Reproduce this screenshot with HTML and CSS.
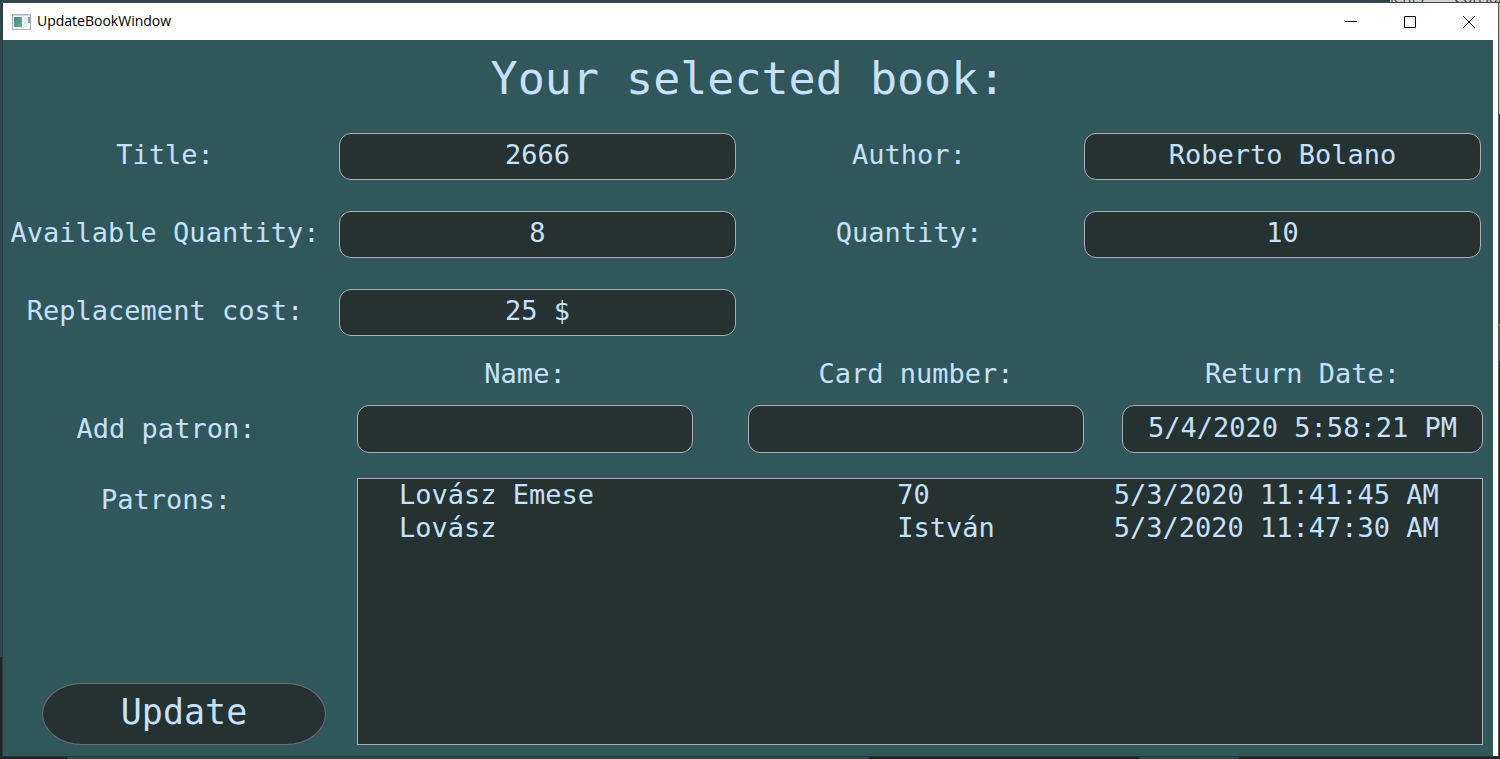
FILE: index.html
```
<!DOCTYPE html>
<html lang="en">
<head>
<meta charset="utf-8">
<title>UpdateBookWindow</title>
<link rel="stylesheet" href="styles.css">
</head>
<body>
<div class="desktop">
  <div class="edge-top" aria-hidden="true"><span class="behind-tabs"><span>ients</span><span>Consol</span></span></div>
  <div class="edge-left"></div>
  <div class="window">
    <header class="titlebar">
      <svg class="app-icon" width="20" height="16" viewBox="0 0 20 16" aria-hidden="true">
        <defs>
          <linearGradient id="pane" x1="0" y1="0" x2="1" y2="1">
            <stop offset="0" stop-color="#4a7fa5"/>
            <stop offset="1" stop-color="#5fb878"/>
          </linearGradient>
        </defs>
        <rect x="0.5" y="0.5" width="18" height="15" fill="#f4f4f6" stroke="#b4b4b8"/>
        <rect x="1" y="1" width="17" height="1" fill="#d4d4d8"/>
        <rect x="2" y="3" width="8" height="10" fill="url(#pane)"/>
        <rect x="12" y="3" width="3" height="10" fill="#e2e6e9"/>
        <rect x="16" y="3" width="2" height="6" fill="#68a8b8"/>
      </svg>
      <span class="caption">UpdateBookWindow</span>
      <div class="window-buttons">
        <button type="button" aria-label="Minimize"><svg width="12" height="12" viewBox="0 0 12 12"><path d="M0 5.5H12" stroke="#000"/></svg></button>
        <button type="button" aria-label="Maximize"><svg width="12" height="12" viewBox="0 0 12 12"><path d="M.5 .5H11.5V11.5H.5Z" stroke="#000" fill="none"/></svg></button>
        <button type="button" aria-label="Close"><svg width="12" height="12" viewBox="0 0 12 12"><path d="M0 0L12 12M12 0L0 12" stroke="#000"/></svg></button>
      </div>
    </header>
    <main class="client">
      <h1 class="heading">Your selected book:</h1>
      <form class="form">
        <div class="details">
          <label class="label" for="title">Title:</label>
          <input class="field" id="title" value="2666">
          <label class="label label-right" for="author">Author:</label>
          <input class="field" id="author" value="Roberto Bolano">
          <label class="label" for="available">Available Quantity:</label>
          <input class="field" id="available" value="8">
          <label class="label label-right" for="quantity">Quantity:</label>
          <input class="field" id="quantity" value="10">
          <label class="label" for="cost">Replacement cost:</label>
          <input class="field" id="cost" value="25 $">
        </div>
        <div class="patron-area">
          <div class="side">
            <span class="label" id="add-patron">Add patron:</span>
            <span class="label patrons-label" id="patrons">Patrons:</span>
            <button class="update" type="button">Update</button>
          </div>
          <div class="patron-main">
            <div class="patron-fields" role="group" aria-labelledby="add-patron">
              <label class="label" for="name">Name:</label>
              <label class="label" for="card">Card number:</label>
              <label class="label label-date" for="date">Return Date:</label>
              <input class="field" id="name">
              <input class="field" id="card">
              <input class="field field-date" id="date" value="5/4/2020 5:58:21 PM">
            </div>
            <div class="list">
              <table class="patrons" aria-labelledby="patrons">
                <colgroup><col class="col-name"><col class="col-card"><col></colgroup>
                <tbody>
                  <tr><td>Lovász Emese</td><td>70</td><td>5/3/2020 11:41:45 AM</td></tr>
                  <tr><td>Lovász</td><td>István</td><td>5/3/2020 11:47:30 AM</td></tr>
                </tbody>
              </table>
            </div>
          </div>
        </div>
      </form>
    </main>
  </div>
  <div class="edge-right"></div>
  <div class="edge-bottom"><span></span><span></span></div>
</div>
</body>
</html>
```
FILE: styles.css
```
* { box-sizing: border-box; }

body {
  margin: 0;
  background: #1f2726;
  color: #c5e1ff;
  font-family: "DejaVu Sans Mono", monospace;
  font-size: 27px;
  line-height: 34px;
}

.desktop {
  display: grid;
  grid-template: 3px 1fr 3px / 3px 1fr 2px;
  min-height: 100vh;
}

/* Slivers of the windows that lie behind this one */
.edge-top {
  grid-column: 1 / -1;
  display: flex;
  justify-content: flex-end;
  overflow: hidden;
  height: 3px;
  background: #2a4a4e;
  border-bottom: 1px solid #3b4748;
}
.behind-tabs {
  display: flex;
  gap: 30px;
  width: 110px;
  height: 2px;
  align-items: flex-end;
  background: #d2d2d2;
  color: #444;
  font: 15px/18px "Open Sans", sans-serif;
}
.behind-tabs span { margin-bottom: -4px; }
.edge-left {
  background: linear-gradient(#2a4a4e 654px, #1f2726 0);
  border-right: 1px solid #2c3c3e;
}
.edge-right {
  background: linear-gradient(#c8c8c8 111px, #24413f 0 321px, #999 0 323px, #555 0 358px, #1f2726 0);
  border-left: 1px solid #555;
}
.edge-bottom {
  grid-column: 1 / -1;
  display: flex;
  justify-content: flex-end;
  gap: 98px;
  background: linear-gradient(90deg, #1f2424 67px, #2a4a4e 0);
  border-top: 1px solid #2c3536;
}
.edge-bottom span {
  width: 262px;
  border-radius: 12px 0 0 0;
  background: #202625;
}
.edge-bottom span:first-child {
  width: 272px;
  border-radius: 12px 12px 0 0;
}

.window {
  display: flex;
  flex-direction: column;
  background: #fff;
}
.titlebar {
  display: flex;
  align-items: center;
  height: 37px;
  padding-left: 9px;
  color: #000;
}
.caption {
  margin-left: 5px;
  padding-bottom: 2px;
  font: 14px/20px "Open Sans", sans-serif;
}
.window-buttons {
  display: flex;
  margin-left: auto;
}
.window-buttons button {
  display: grid;
  place-items: center;
  width: 59px;
  height: 36px;
  padding: 0;
  border: 0;
  background: none;
}

.client {
  flex: 1;
  display: flex;
  flex-direction: column;
  margin-right: 5px;
  padding: 12px 0 11px;
  background: #30575a;
}
.heading {
  margin: 0 0 27px;
  font-size: 45px;
  line-height: 54px;
  font-weight: 400;
  text-align: center;
}
.form {
  flex: 1;
  display: flex;
  flex-direction: column;
  gap: 21px;
}
.label {
  padding-right: 12px;
  text-align: center;
  white-space: nowrap;
}
.field {
  width: 100%;
  height: 47px;
  padding: 0 8px 4px;
  border: 1px solid #abadb3;
  border-radius: 12px;
  background: #263131;
  color: inherit;
  font: inherit;
  text-align: center;
}

.details {
  display: grid;
  grid-template-columns: 336fr 397fr 348fr 397fr;
  row-gap: 31px;
  align-items: center;
  padding-right: 12px;
}
.details .label { padding-bottom: 4px; }
.details .label-right { padding-right: 2px; }

.patron-area {
  flex: 1;
  display: grid;
  grid-template-columns: 354fr 1126fr;
  padding-right: 10px;
}
.side {
  display: flex;
  flex-direction: column;
  padding-top: 55px;
}
.side .label { padding-right: 28px; }
.patrons-label { margin-top: 37px; }
.update {
  height: 62px;
  margin: auto 31px 0 39px;
  padding: 0 0 4px;
  border: 1px solid #707070;
  border-radius: 40px / 50%;
  background: #263131;
  color: inherit;
  font: inherit;
  font-size: 35px;
}

.patron-main {
  display: flex;
  flex-direction: column;
  gap: 25px;
}
.patron-fields {
  display: grid;
  grid-template-columns: 336fr 55fr 336fr 38fr 361fr;
  row-gap: 14px;
}
.patron-fields .label { padding: 0; }
.patron-fields .field { height: 48px; }
.patron-fields #card, .patron-fields [for="card"] { grid-column: 3; }
.patron-fields .label-date, .patron-fields .field-date { grid-column: 5; }

.list {
  flex: 1;
  padding-left: 41px;
  border: 1px solid #abadb3;
  background: #263131;
}
.patrons {
  width: 100%;
  table-layout: fixed;
  border-collapse: collapse;
  line-height: 31px;
}
.col-name { width: 46%; }
.col-card { width: 20%; }
.patrons td {
  padding: 0 0 2px;
  white-space: nowrap;
}
```
